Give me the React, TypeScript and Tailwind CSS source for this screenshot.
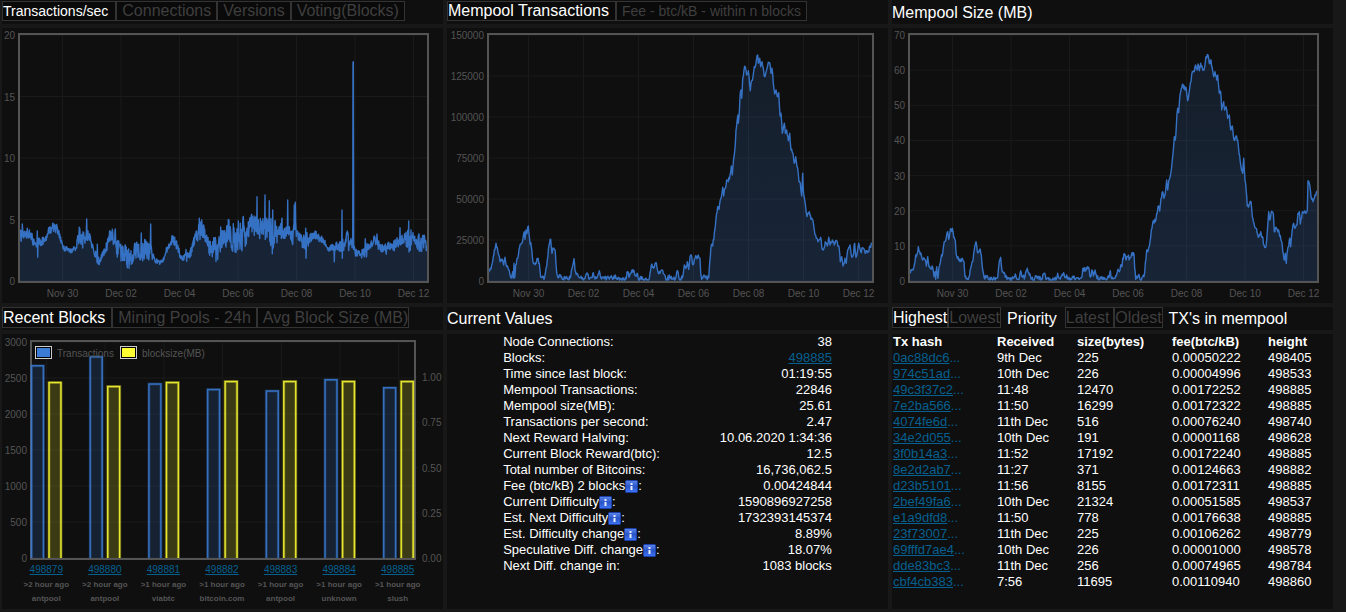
import { Fragment, ReactNode } from 'react'

// Samples are "x,y" pairs, three units per pixel, y going down. 394 is the zero line.
const BASE = 394

// x, top and bottom of the noise band
const TX_BAND = `58,245,270 66,232,272 72,240,265 84,235,262 95,250,278 105,280,292 111,268,292 125,265,285 135,260,276 145,235,258
158,218,242 170,225,248 180,250,268 190,288,302 205,290,305 215,298,308 228,278,300 238,238,276 250,250,295 260,240,280
268,248,278 276,275,292 285,308,322 292,300,338 300,315,342 310,303,316 320,275,305 328,242,272 338,240,270 346,245,310
355,270,320 365,285,330 378,290,350 390,305,350 400,280,330 415,280,326 425,275,330 435,270,340 445,285,345 452,280,330
458,305,325 466,325,338 480,335,343 490,325,336 500,290,308 512,260,282 522,259,287 532,275,298 540,308,322 555,300,335
565,303,328 575,290,312 585,250,278 597,215,265 608,215,270 620,255,282 632,275,330 645,265,330 655,270,325 662,240,300
675,220,288 690,210,290 705,210,300 720,215,305 730,208,305 740,215,278 750,192,262 760,192,248 771,200,265 785,210,265
795,205,265 808,200,260 817,210,305 825,218,300 835,235,266 845,210,260 855,220,265 862,215,258 870,238,262 878,235,290
886,190,255 892,245,264 905,252,285 916,245,305 925,258,286 945,243,264 960,255,277 970,265,283 985,285,305 1003,285,312
1015,275,302 1026,270,310 1033,270,300 1041,243,282 1048,265,310 1055,268,292 1068,295,318 1080,305,322 1096,285,320
1110,280,310 1122,260,285 1131,262,292 1145,285,305 1160,275,310 1175,283,300 1185,270,300 1200,255,285 1210,252,276
1222,240,290 1236,238,305 1245,245,278 1255,250,300 1265,263,302 1273,252,296 1281,292,302`

const TX_SPIKES: Record<number, number> = {
  67: 222, 112: 243, 113: 322, 238: 232, 260: 207, 292: 283, 346: 237, 424: 249, 452: 222, 598: 205, 662: 231, 771: 140,
  795: 135, 808: 152, 818: 180, 846: 205, 863: 150, 883: 165, 886: 157, 917: 235, 918: 325, 1003: 335, 1026: 180, 1027: 325,
  1059: -262, 1060: -265, 1096: 266, 1131: 252, 1200: 233, 1226: 213, 1227: 306,
}

const MEMPOOL_TX = `130,372 134,362 140,345 145,318 148,300 153,280 158,300 165,335 172,328 176,345 180,322 185,350 190,358 195,375
199,384 203,365 205,385 207,340 209,383 212,345 218,325 224,290 228,282 234,265 238,245 240,268 243,240 246,250 250,228
254,270 259,290 264,335 272,338 278,325 283,340 287,382 293,378 297,388 303,355 307,330 312,285 317,268 321,310 326,295
331,305 335,368 341,383 347,375 352,388 360,385 370,387 377,380 381,355 387,326 390,360 396,370 402,382 410,386 420,385
428,372 433,388 440,382 445,368 450,387 458,378 463,362 468,385 476,382 485,386 495,382 505,386 511,375 518,388 530,390
543,387 548,365 552,382 558,370 565,360 571,378 576,370 581,390 590,380 597,388 613,386 619,345 626,355 634,338 638,362
645,370 651,360 659,375 665,388 675,380 685,387 693,382 698,362 702,386 712,384 718,345 722,355 727,335 731,358 735,320
739,315 744,345 750,325 758,318 765,325 767,370 770,388 777,375 785,383 791,383 793,355 796,320 799,285 803,288 808,250
813,205 818,170 822,178 828,145 833,112 836,138 840,115 845,90 850,95 855,75 859,48 862,75 866,25 870,-5 873,-60 876,-85
879,-105 880,-80 882,-100 885,-160 888,-180 890,-155 893,-215 897,-240 901,-250 905,-225 910,-238 914,-195 916,-178
919,-205 924,-220 928,-250 932,-255 938,-285 940,-260 944,-275 947,-250 951,-265 956,-235 960,-220 966,-245 970,-263
974,-262 978,-230 981,-245 985,-200 989,-168 993,-180 997,-160 1001,-172 1005,-105 1008,-110 1012,-50 1018,-80 1021,-50
1025,-60 1030,-28 1034,-50 1038,0 1044,10 1048,40 1052,20 1058,55 1062,95 1066,100 1070,138 1073,70 1075,120 1080,155
1086,200 1093,185 1098,208 1104,212 1108,240 1114,265 1119,275 1127,262 1130,290 1135,300 1141,275 1147,288 1151,262
1155,285 1162,270 1168,285 1175,272 1182,290 1186,335 1190,320 1194,348 1200,325 1204,340 1208,300 1215,285 1219,315
1224,318 1229,280 1233,322 1241,280 1247,305 1255,295 1262,310 1270,305 1275,288 1281,280`

const MEMPOOL_SIZE = `76,370 82,358 88,345 92,315 96,312 100,290 104,305 109,315 113,330 120,328 124,348 128,320 132,350 138,355
143,352 147,380 151,365 152,388 155,350 159,385 162,350 168,325 173,310 178,275 184,262 188,245 191,268 195,245 202,235
206,262 211,270 214,315 219,320 225,335 231,325 237,335 240,380 246,385 252,380 257,355 263,335 268,300 273,275 277,305
284,298 289,315 293,360 298,385 305,380 310,387 325,386 338,383 341,350 347,322 350,355 356,370 361,382 370,386 385,385
391,372 396,388 403,385 407,362 412,382 420,380 427,355 433,375 440,387 455,382 470,387 477,370 483,388 500,390 515,385
518,370 524,385 530,378 536,368 541,380 545,375 548,387 560,388 567,378 572,387 588,384 595,355 600,362 608,350 613,362
615,380 622,362 625,378 630,360 634,375 640,388 650,380 660,387 672,383 676,362 680,386 690,385 696,370 699,358 703,365
707,345 711,350 713,325 719,312 723,330 729,320 734,325 740,310 747,312 749,355 752,388 760,375 765,388 777,380 781,340
785,300 789,305 795,275 799,240 805,212 811,215 815,190 821,168 824,183 828,145 833,125 837,145 842,120 845,90 848,120
853,88 856,78 860,50 863,20 865,0 868,-40 871,-30 874,-70 876,-110 878,-125 881,-112 885,-165 889,-185 894,-197 900,-180
903,-188 908,-148 912,-170 916,-200 922,-235 928,-235 932,-255 936,-240 939,-258 943,-238 947,-260 953,-240 958,-245
963,-280 969,-285 973,-260 978,-270 982,-245 986,-220 990,-235 995,-210 998,-225 1003,-170 1007,-175 1010,-120 1016,-145
1019,-120 1023,-130 1028,-95 1033,-105 1037,-60 1042,-72 1047,-30 1053,-42 1058,-30 1062,10 1068,50 1073,70 1076,25
1080,90 1084,125 1087,168 1094,160 1098,155 1102,200 1107,220 1113,235 1120,262 1127,245 1132,260 1137,285 1143,290
1147,245 1151,185 1154,210 1158,190 1165,190 1168,245 1175,235 1182,245 1190,275 1195,310 1198,330 1201,310 1204,340
1207,305 1211,290 1214,265 1217,290 1221,245 1226,220 1230,235 1236,225 1239,190 1243,185 1246,222 1252,185 1262,190
1267,180 1269,92 1274,105 1278,140 1284,155 1290,135 1296,122`

type Point = [number, number]

const parse = (s: string) => s.trim().split(/\s+/).map(p => p.split(',').map(Number))

const makeRandom = (seed: number) => () => {
  seed = (seed * 16807) % 2147483647
  return seed / 2147483647
}

function lineSeries(src: string): Point[] {
  const pts = parse(src)
  const rnd = makeRandom(41)
  const out: Point[] = []
  for (let i = 0; i < pts.length - 1; i++) {
    const [x1, y1] = pts[i]
    const [x2, y2] = pts[i + 1]
    const n = Math.max(1, Math.round((x2 - x1) / 2))
    for (let k = 0; k < n; k++) {
      const jitter = k === 0 ? 0 : (rnd() - 0.5) * 14
      out.push([x1 + ((x2 - x1) * k) / n, Math.min(390, y1 + ((y2 - y1) * k) / n + jitter)])
    }
  }
  out.push(pts[pts.length - 1] as Point)
  return out
}

function bandSeries(src: string, spikes: Record<number, number>): Point[] {
  const band = parse(src)
  const rnd = makeRandom(977)
  const out: Point[] = []
  let i = 0
  for (let x = band[0][0]; x <= band[band.length - 1][0]; x++) {
    while (i < band.length - 2 && x > band[i + 1][0]) i++
    const [x1, t1, b1] = band[i]
    const [x2, t2, b2] = band[i + 1]
    const f = (x - x1) / (x2 - x1)
    const top = t1 + (t2 - t1) * f
    const bottom = b1 + (b2 - b1) * f
    out.push([x, spikes[x] ?? top + (bottom - top) * (rnd() * 1.2 - 0.1)])
  }
  return out
}

const DATES = ['Nov 30', 'Dec 02', 'Dec 04', 'Dec 06', 'Dec 08', 'Dec 10', 'Dec 12']

type LineChartProps = {
  id: string
  label: string
  points: Point[]
  shift: number
  left: number
  right: number
  firstTick: number
  tickStep: number
  max: number
  step: number
}

function LineChart({ id, label, points, shift, left, right, firstTick, tickStep, max, step }: LineChartProps) {
  const line = points.map(([x, y]) => `${((x - shift) / 3).toFixed(1)},${((y + 366) / 3).toFixed(1)}`)
  const zero = (BASE + 366) / 3
  const area = `${left},${zero} ${line.join(' ')} ${right},${zero}`
  const values = Array.from({ length: max / step + 1 }, (_, i) => i * step)
  const yOf = (v: number) => 253 - (v / max) * 246

  return (
    <svg viewBox="0 0 441 275" className="block w-full overflow-visible" role="img" aria-label={label}>
      <defs>
        <linearGradient id={id} gradientUnits="userSpaceOnUse" x1="0" y1="7" x2="0" y2="253">
          <stop offset="0" stopColor="#3a7bd5" stopOpacity="0.12" />
          <stop offset="0.6" stopColor="#3a7bd5" stopOpacity="0.18" />
          <stop offset="1" stopColor="#3a7bd5" stopOpacity="0.2" />
        </linearGradient>
      </defs>
      {DATES.map((d, i) => (
        <Fragment key={d}>
          <line x1={firstTick + i * tickStep} x2={firstTick + i * tickStep} y1="7" y2="253" stroke="#1a1a1a" />
          <text x={firstTick + i * tickStep} y="269" textAnchor="middle" fontSize="10" fill="#545454">{d}</text>
        </Fragment>
      ))}
      {values.map(v => (
        <Fragment key={v}>
          <line x1={left} x2={right} y1={yOf(v)} y2={yOf(v)} stroke="#1a1a1a" />
          <text x={left - 5} y={yOf(v) + 4} textAnchor="end" fontSize="10" fill="#545454">{v}</text>
        </Fragment>
      ))}
      <polygon points={area} fill={`url(#${id})`} />
      <polyline points={line.join(' ')} fill="none" stroke="#3a7bd5" strokeOpacity="0.9" strokeWidth="1.4" strokeLinejoin="round" />
      <rect x={left - 1} y="6" width={right - left + 2} height="248" fill="none" stroke="#545454" strokeWidth="2" />
    </svg>
  )
}

const BLOCKS = [
  { height: 498879, ago: '>2 hour ago', pool: 'antpool', tx: 2670, size: 0.97 },
  { height: 498880, ago: '>2 hour ago', pool: 'antpool', tx: 2795, size: 0.948 },
  { height: 498881, ago: '>1 hour ago', pool: 'viabtc', tx: 2418, size: 0.97 },
  { height: 498882, ago: '>1 hour ago', pool: 'bitcoin.com', tx: 2340, size: 0.975 },
  { height: 498883, ago: '>1 hour ago', pool: 'antpool', tx: 2320, size: 0.975 },
  { height: 498884, ago: '>1 hour ago', pool: 'unknown', tx: 2475, size: 0.975 },
  { height: 498885, ago: '>1 hour ago', pool: 'slush', tx: 2365, size: 0.975 },
]

function Bar({ x, y, color }: { x: number; y: number; color: string }) {
  const d = `M${x},224 V${y} H${x + 12} V224`
  return (
    <g>
      <path d={d} fill={color} fillOpacity="0.18" stroke={color} strokeOpacity="0.25" strokeWidth="3" />
      <path d={d} fill="none" stroke={color} strokeOpacity="0.85" strokeWidth="1.5" />
    </g>
  )
}

function BlocksChart() {
  return (
    <svg viewBox="0 0 441 228" className="block w-full overflow-visible" role="img" aria-label="Recent blocks">
      {[0, 500, 1000, 1500, 2000, 2500, 3000].map(v => (
        <Fragment key={v}>
          <line x1="30" x2="412" y1={224 - v * 0.072} y2={224 - v * 0.072} stroke="#1a1a1a" />
          <text x="25" y={228 - v * 0.072} textAnchor="end" fontSize="10" fill="#545454">{v}</text>
        </Fragment>
      ))}
      {['0.00', '0.25', '0.50', '0.75', '1.00'].map((v, i) => (
        <Fragment key={v}>
          <line x1="412" x2="416" y1={224 - i * 45.25} y2={224 - i * 45.25} stroke="#1a1a1a" />
          <text x="420" y={228 - i * 45.25} fontSize="10" fill="#545454">{v}</text>
        </Fragment>
      ))}
      {BLOCKS.map((b, i) => (
        <line key={b.height} x1={44.5 + i * 58.7} x2={44.5 + i * 58.7} y1="8" y2="224" stroke="#1a1a1a" />
      ))}
      <rect x="29" y="7" width="384" height="218" fill="none" stroke="#545454" strokeWidth="2" />
      {BLOCKS.map((b, i) => (
        <Fragment key={b.height}>
          <Bar x={29.5 + i * 58.7} y={224 - b.tx * 0.072} color="#3a7bd5" />
          <Bar x={47 + i * 58.7} y={224 - b.size * 181} color="#ffff33" />
        </Fragment>
      ))}
      <line x1="28" x2="414" y1="225" y2="225" stroke="#545454" strokeWidth="2" />
      <g fontSize="10" fill="#545454">
        <rect x="33.5" y="12.5" width="16" height="12" fill="#000" stroke="#ccc" />
        <rect x="35" y="14" width="13" height="9" fill="#3a7bd5" />
        <text x="55" y="23">Transactions</text>
        <rect x="118.5" y="12.5" width="16" height="12" fill="#000" stroke="#ccc" />
        <rect x="120" y="14" width="13" height="9" fill="#ffff33" />
        <text x="140" y="23">blocksize(MB)</text>
      </g>
    </svg>
  )
}

function Tab({ children, active, className = 'px-[5px]' }: { children: ReactNode; active?: boolean; className?: string }) {
  return (
    <button type="button" className={`h-5 border border-[#333] bg-[#0a0a0a] leading-[18px] whitespace-nowrap ${active ? 'text-white' : 'text-[#3f3f3f]'} ${className}`}>
      {children}
    </button>
  )
}

function Panel({ header, headerClass = 'h-[23px] [&>button]:h-[21px]', children }: { header: ReactNode; headerClass?: string; children: ReactNode }) {
  return (
    <section className="flex flex-col gap-1">
      <header className={`flex items-start bg-[#0f0f0f] text-base ${headerClass}`}>{header}</header>
      <div className="min-h-[275px] bg-[#0f0f0f]">{children}</div>
    </section>
  )
}

function InfoIcon() {
  return (
    <svg viewBox="0 0 13 13" className="inline-block h-[13px] w-[13px] align-[-3px]" aria-hidden="true">
      <defs>
        <linearGradient id="info" x1="0" y1="0" x2="0" y2="1">
          <stop offset="0" stopColor="#5b86ea" />
          <stop offset="0.5" stopColor="#2a55c8" />
          <stop offset="1" stopColor="#3f74f5" />
        </linearGradient>
      </defs>
      <rect x="0.5" y="0.5" width="12" height="12" rx="1" fill="url(#info)" stroke="#1c3fa8" />
      <path d="M5.5 3h2v2h-2zM5.5 6h2v4h-2z" fill="#e8eefc" />
    </svg>
  )
}

const VALUES = [
  { name: 'Node Connections', value: '38' },
  { name: 'Blocks', value: '498885', link: true },
  { name: 'Time since last block', value: '01:19:55' },
  { name: 'Mempool Transactions', value: '22846' },
  { name: 'Mempool size(MB)', value: '25.61' },
  { name: 'Transactions per second', value: '2.47' },
  { name: 'Next Reward Halving', value: '10.06.2020 1:34:36' },
  { name: 'Current Block Reward(btc)', value: '12.5' },
  { name: 'Total number of Bitcoins', value: '16,736,062.5' },
  { name: 'Fee (btc/kB) 2 blocks', value: '0.00424844', info: true },
  { name: 'Current Difficulty', value: '1590896927258', info: true },
  { name: 'Est. Next Difficulty', value: '1732393145374', info: true },
  { name: 'Est. Difficulty change', value: '8.89%', info: true },
  { name: 'Speculative Diff. change', value: '18.07%', info: true },
  { name: 'Next Diff. change in', value: '1083 blocks' },
]

const TXS = [
  ['0ac88dc6', '9th Dec', '225', '0.00050222', '498405'],
  ['974c51ad', '10th Dec', '226', '0.00004996', '498533'],
  ['49c3f37c2', '11:48', '12470', '0.00172252', '498885'],
  ['7e2ba566', '11:50', '16299', '0.00172322', '498885'],
  ['4074fe6d', '11th Dec', '516', '0.00076240', '498740'],
  ['34e2d055', '10th Dec', '191', '0.00001168', '498628'],
  ['3f0b14a3', '11:52', '17192', '0.00172240', '498885'],
  ['8e2d2ab7', '11:27', '371', '0.00124663', '498882'],
  ['d23b5101', '11:56', '8155', '0.00172311', '498885'],
  ['2bef49fa6', '10th Dec', '21324', '0.00051585', '498537'],
  ['e1a9dfd8', '11:50', '778', '0.00176638', '498885'],
  ['23f73007', '11th Dec', '225', '0.00106262', '498779'],
  ['69fffd7ae4', '10th Dec', '226', '0.00001000', '498578'],
  ['dde83bc3', '11th Dec', '256', '0.00074965', '498784'],
  ['cbf4cb383', '7:56', '11695', '0.00110940', '498860'],
]

const TX_RATE_POINTS = bandSeries(TX_BAND, TX_SPIKES)
const MEMPOOL_TX_POINTS = lineSeries(MEMPOOL_TX)
const MEMPOOL_SIZE_POINTS = lineSeries(MEMPOOL_SIZE)

export default function App() {
  return (
    <main className="min-h-screen bg-[#181818] pr-[13px] pl-0.5 font-['Liberation_Sans',Arial,sans-serif] text-white">
      <div className="grid grid-cols-3 gap-1">
        <Panel headerClass="h-6 pt-px" header={<>
          <Tab active className="pr-[7px] text-sm leading-[18px]">Transactions/sec</Tab>
          <Tab>Connections</Tab>
          <Tab>Versions</Tab>
          <Tab>Voting(Blocks)</Tab>
        </>}>
          <LineChart id="fill-rate" label="Transactions per second" points={TX_RATE_POINTS} shift={6} left={18} right={425} firstTick={60.5} tickStep={58.5} max={20} step={5} />
        </Panel>

        <Panel headerClass="h-6 pt-px" header={<>
          <Tab active className="pr-1.5">Mempool Transactions</Tab>
          <Tab className="px-[5px] text-sm leading-[18px]">Fee - btc/kB - within n blocks</Tab>
        </>}>
          <LineChart id="fill-count" label="Mempool transactions" points={MEMPOOL_TX_POINTS} shift={6} left={42} right={425} firstTick={81.5} tickStep={55} max={150000} step={25000} />
        </Panel>

        <Panel headerClass="h-6 pt-px" header={<h2 className="leading-6">Mempool Size (MB)</h2>}>
          <LineChart id="fill-size" label="Mempool size in MB" points={MEMPOOL_SIZE_POINTS} shift={21} left={18} right={425} firstTick={60.5} tickStep={58.5} max={70} step={10} />
        </Panel>

        <Panel header={<>
          <Tab active className="pr-1.5 pt-px">Recent Blocks</Tab>
          <Tab className="px-[5px] pt-px">Mining Pools - 24h</Tab>
          <Tab className="pt-px pl-[5px]">Avg Block Size (MB)</Tab>
        </>}>
          <BlocksChart />
          <div className="mr-4 ml-[15px] grid grid-cols-7 text-center text-[8px] leading-[14px] font-bold text-[#545454]">
            {BLOCKS.map(b => (
              <div key={b.height} className="whitespace-nowrap">
                <a href={`#block-${b.height}`} className="block text-[10px] leading-4 font-normal text-[#05608f] underline">{b.height}</a>
                <p>{b.ago}</p>
                <p>{b.pool}</p>
              </div>
            ))}
          </div>
        </Panel>

        <Panel header={<h2 className="leading-6">Current Values</h2>}>
          <table className="mx-auto w-3/4 text-[13px] leading-4">
            <tbody>
              {VALUES.map(v => (
                <tr key={v.name}>
                  <th scope="row" className="px-px py-0 text-left font-normal">{v.name}{v.info && <InfoIcon />}:</th>
                  <td className="px-px py-0 text-right">
                    {v.link ? <a href={`#block-${v.value}`} className="text-[#05608f] underline">{v.value}</a> : v.value}
                  </td>
                </tr>
              ))}
            </tbody>
          </table>
        </Panel>

        <Panel header={<>
          <Tab active className="px-0 pt-px">Highest</Tab>
          <Tab className="px-0 pt-px">Lowest</Tab>
          <h2 className="mr-2 ml-1.5 leading-6">Priority</h2>
          <Tab className="pt-px pr-1">Latest</Tab>
          <Tab className="px-0 pt-px">Oldest</Tab>
          <h2 className="ml-1.5 leading-6">TX's in mempool</h2>
        </>}>
          <table className="w-full table-fixed text-left text-[13px] leading-4">
            <thead>
              <tr>
                <th className="w-[104px] px-px py-0">Tx hash</th>
                <th className="w-20 px-px py-0">Received</th>
                <th className="w-[95px] px-px py-0">size(bytes)</th>
                <th className="w-24 px-px py-0">fee(btc/kB)</th>
                <th className="px-px py-0">height</th>
              </tr>
            </thead>
            <tbody>
              {TXS.map(([hash, ...rest]) => (
                <tr key={hash}>
                  <td className="px-px py-0 text-[#05608f]"><a href={`#tx-${hash}`} className="underline">{hash}</a>...</td>
                  {rest.map((cell, i) => <td key={i} className="px-px py-0">{cell}</td>)}
                </tr>
              ))}
            </tbody>
          </table>
        </Panel>
      </div>
    </main>
  )
}
